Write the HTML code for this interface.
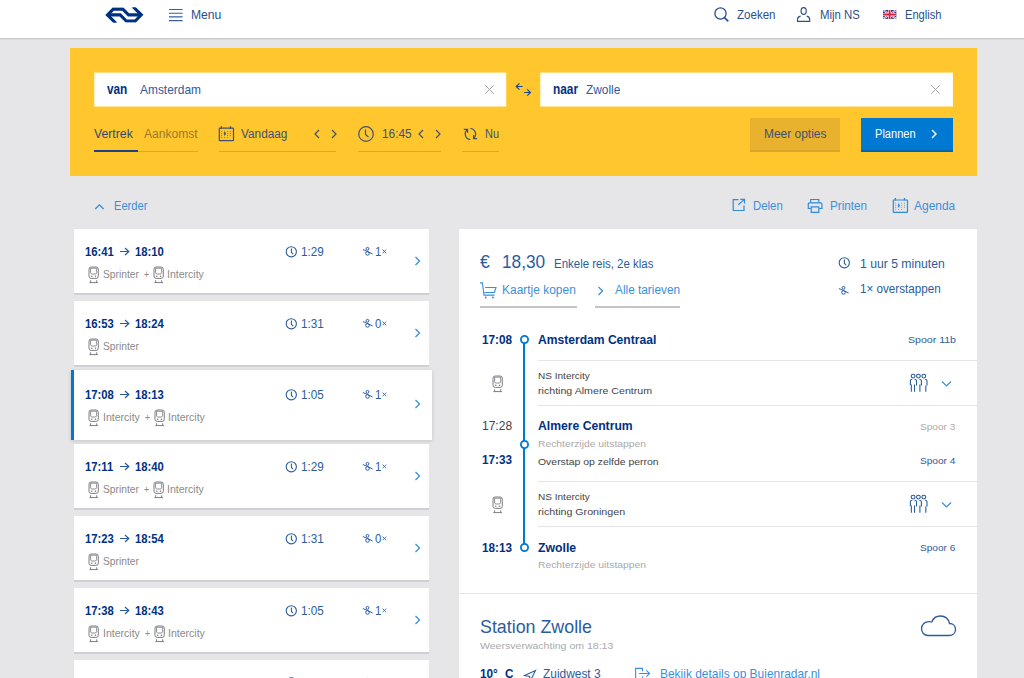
<!DOCTYPE html>
<html><head><meta charset="utf-8"><style>
html,body{margin:0;padding:0;}
body{width:1024px;height:678px;overflow:hidden;position:relative;background:#e6e6e9;font-family:"Liberation Sans",sans-serif;}
.t{position:absolute;white-space:nowrap;line-height:1;transform-origin:0 0;}
svg{overflow:visible}
</style></head><body>
<div style="position:absolute;left:0px;top:0px;width:1024px;height:38px;background:#fff"></div>
<div style="position:absolute;left:0px;top:38px;width:1024px;height:1px;background:#c9c9ce"></div>
<div style="position:absolute;left:0px;top:39px;width:1024px;height:1px;background:#dcdce0"></div>
<svg style="position:absolute;left:103px;top:5px;" width="44" height="21" viewBox="0 0 1024 489" fill="none"><defs><clipPath id="lc"><rect x="0" y="55" width="1024" height="357"/></clipPath></defs><g clip-path="url(#lc)" stroke="#003082" stroke-width="72" stroke-linejoin="miter" stroke-miterlimit="4" fill="none"><polyline points="300,426 104,230 239,95 460,95 595,230 891,230"/><polyline points="700,39 891,230 750,372 542,372 400,230 104,230"/></g></svg>
<svg style="position:absolute;left:168px;top:5px;" width="16" height="20" viewBox="0 0 16 20" fill="none"><path d="M1 4.5 H14.6 M1 8.2 H14.6 M1 11.9 H14.6 M1 15.6 H14.6" stroke="#3a5f9a" stroke-width="1.1"/></svg>
<div class="t" style="left:191.30px;top:9px;font-size:12.5px;transform:scaleX(0.9696);color:#2b4f8e;">Menu</div>
<svg style="position:absolute;left:712px;top:6px;" width="18" height="18" viewBox="0 0 18 18" fill="none"><circle cx="8.5" cy="7.5" r="5.6" stroke="#2b4f8e" stroke-width="1.3"/><line x1="12.5" y1="11.6" x2="16.3" y2="15.4" stroke="#2b4f8e" stroke-width="1.6"/></svg>
<div class="t" style="left:736.60px;top:9px;font-size:12.5px;transform:scaleX(0.9233);color:#2b4f8e;">Zoeken</div>
<svg style="position:absolute;left:792px;top:4px;" width="22" height="20" viewBox="0 0 22 20" fill="none"><g stroke="#2b4f8e" stroke-width="1.15" fill="none"><ellipse cx="11.65" cy="7" rx="2.6" ry="3.4"/><path d="M8.6 12.1 Q5.5 12.6 5.5 15.5 V17.4 H17.7 V15.5 Q17.7 12.6 14.7 12.1"/></g></svg>
<div class="t" style="left:820.30px;top:9px;font-size:12.5px;transform:scaleX(0.9097);color:#2b4f8e;">Mijn NS</div>
<svg style="position:absolute;left:882.6px;top:10px" width="13.3" height="8.9" viewBox="0 0 13 8" preserveAspectRatio="none"><rect width="13" height="8" fill="#1f3f8f"/><path d="M0 0 L13 8 M13 0 L0 8" stroke="#fff" stroke-width="1.8"/><path d="M0 0 L13 8 M13 0 L0 8" stroke="#e0304a" stroke-width="0.7"/><path d="M6.5 0 V8 M0 4 H13" stroke="#fff" stroke-width="2.8"/><path d="M6.5 0 V8 M0 4 H13" stroke="#dc1c3c" stroke-width="1.7"/></svg>
<div class="t" style="left:904.90px;top:9px;font-size:12.5px;transform:scaleX(0.8878);color:#2b4f8e;">English</div>
<div style="position:absolute;left:70px;top:48px;width:907px;height:128px;background:#ffc62e"></div>
<svg style="position:absolute;left:0;top:0" width="1024" height="178"><rect x="94.3" y="72.6" width="411.9" height="33.9" fill="#fff"/><rect x="540.3" y="72.6" width="412.6" height="33.9" fill="#fff"/></svg>
<div class="t" style="left:106.60px;top:82px;font-size:14px;transform:scaleX(0.8423);color:#003082;font-weight:bold;">van</div>
<div class="t" style="left:140.20px;top:84px;font-size:12.4px;transform:scaleX(0.9621);color:#2c5b9e;">Amsterdam</div>
<svg style="position:absolute;left:484px;top:84px;" width="11" height="11" viewBox="0 0 11 11" fill="none"><path d="M1.2 1.2 L9.8 9.8 M9.8 1.2 L1.2 9.8" stroke="#a6a6a6" stroke-width="1"/></svg>
<div class="t" style="left:553.00px;top:82px;font-size:14px;transform:scaleX(0.8460);color:#003082;font-weight:bold;">naar</div>
<div class="t" style="left:585.70px;top:84px;font-size:12.4px;transform:scaleX(0.9568);color:#2c5b9e;">Zwolle</div>
<svg style="position:absolute;left:930px;top:84px;" width="11" height="11" viewBox="0 0 11 11" fill="none"><path d="M1.2 1.2 L9.8 9.8 M9.8 1.2 L1.2 9.8" stroke="#a6a6a6" stroke-width="1"/></svg>
<svg style="position:absolute;left:510px;top:78px;" width="24" height="22" viewBox="0 0 24 22" fill="none"><g stroke="#1d4380" stroke-width="1.1" fill="none"><path d="M6.2 8.5 H12.6 M9.4 5.3 L6.2 8.5 L9.4 11.7"/><path d="M14.2 14.5 H20.5 M17.2 11.3 L20.5 14.5 L17.2 17.7"/></g></svg>
<div class="t" style="left:94.00px;top:128px;font-size:12px;transform:scaleX(1.0197);color:#2f4a6e;">Vertrek</div>
<div class="t" style="left:144.00px;top:128px;font-size:12px;transform:scaleX(1.0066);color:#9a7b2a;">Aankomst</div>
<div style="position:absolute;left:94px;top:151px;width:104px;height:1px;background:#d9a92a"></div>
<div style="position:absolute;left:94px;top:150px;width:44px;height:2px;background:#1d4380"></div>
<svg style="position:absolute;left:214px;top:122px;" width="26" height="24" viewBox="0 0 26 24" fill="none"><rect x="5.3" y="6.2" width="14.2" height="12.4" rx="0.6" stroke="#3f5170" stroke-width="1.2"/><path d="M7.4 4.3 V6.7 M16.5 4.3 V6.7" stroke="#3f5170" stroke-width="1.3"/><g fill="#3f5170" opacity="0.55"><rect x="7.1" y="8.9" width="1" height="1"/><rect x="7.1" y="11.0" width="1" height="1"/><rect x="7.1" y="13.0" width="1" height="1"/><rect x="7.1" y="15.1" width="1" height="1"/><rect x="10.1" y="8.9" width="1" height="1"/><rect x="10.1" y="11.0" width="1" height="1"/><rect x="10.1" y="13.0" width="1" height="1"/><rect x="10.1" y="15.1" width="1" height="1"/><rect x="13.1" y="8.9" width="1" height="1"/><rect x="13.1" y="11.0" width="1" height="1"/><rect x="13.1" y="13.0" width="1" height="1"/><rect x="13.1" y="15.1" width="1" height="1"/><rect x="16.0" y="8.9" width="1" height="1"/><rect x="16.0" y="11.0" width="1" height="1"/><rect x="16.0" y="13.0" width="1" height="1"/></g><ellipse cx="10.8" cy="11.6" rx="1" ry="1.5" fill="#3f5170"/></svg>
<div class="t" style="left:240.80px;top:128px;font-size:12px;transform:scaleX(0.9841);color:#3f5170;">Vandaag</div>
<svg style="position:absolute;left:313px;top:129px;" width="9" height="10" viewBox="0 0 9 10" fill="none"><path d="M6 1 L2 5 L6 9" stroke="#3f5170" stroke-width="1.2"/></svg>
<svg style="position:absolute;left:329px;top:129px;" width="9" height="10" viewBox="0 0 9 10" fill="none"><path d="M3 1 L7 5 L3 9" stroke="#3f5170" stroke-width="1.2"/></svg>
<div style="position:absolute;left:219px;top:151px;width:117px;height:1px;background:#d9a92a"></div>
<svg style="position:absolute;left:357px;top:125px;" width="18" height="18" viewBox="0 0 18 18" fill="none"><circle cx="9" cy="9" r="7.3" stroke="#3f5170" stroke-width="1.2"/><path d="M8.5 4.5 V9.5 L11.5 12" stroke="#3f5170" stroke-width="1.2"/></svg>
<div class="t" style="left:382.00px;top:128px;font-size:12px;transform:scaleX(0.9884);color:#3f5170;">16:45</div>
<svg style="position:absolute;left:417px;top:129px;" width="9" height="10" viewBox="0 0 9 10" fill="none"><path d="M6 1 L2 5 L6 9" stroke="#3f5170" stroke-width="1.2"/></svg>
<svg style="position:absolute;left:433px;top:129px;" width="9" height="10" viewBox="0 0 9 10" fill="none"><path d="M3 1 L7 5 L3 9" stroke="#3f5170" stroke-width="1.2"/></svg>
<div style="position:absolute;left:358px;top:151px;width:83px;height:1px;background:#d9a92a"></div>
<svg style="position:absolute;left:458px;top:122px;" width="24" height="24" viewBox="0 0 24 24" fill="none"><g stroke="#3f5170" stroke-width="1.2" fill="none"><path d="M12.4 17.5 A5.5 5.5 0 0 1 9.2 7.8 M5.8 7.3 H9.6 V10.8"/><path d="M12.4 6.5 A5.5 5.5 0 0 1 15.6 16.2 M19.2 16.6 H15.6 V13"/></g></svg>
<div class="t" style="left:485.00px;top:128px;font-size:12px;transform:scaleX(0.9121);color:#3f5170;">Nu</div>
<div style="position:absolute;left:462px;top:151px;width:37px;height:1px;background:#d9a92a"></div>
<div style="position:absolute;left:750px;top:118px;width:90px;height:34px;background:#e8b22e;box-shadow:inset 0 -2px 0 #d9a42a"></div>
<div class="t" style="left:763.80px;top:128px;font-size:12px;transform:scaleX(0.9952);color:#3f5170;">Meer opties</div>
<div style="position:absolute;left:861px;top:118px;width:92px;height:34px;background:#0079d3;box-shadow:inset 0 -2px 0 #0063b0"></div>
<div class="t" style="left:875.40px;top:128px;font-size:12px;transform:scaleX(0.9217);color:#fff;">Plannen</div>
<svg style="position:absolute;left:929px;top:129px;" width="9" height="10" viewBox="0 0 9 10" fill="none"><path d="M3 1 L7 5 L3 9" stroke="#fff" stroke-width="1.4"/></svg>
<svg style="position:absolute;left:93px;top:202px;" width="12" height="9" viewBox="0 0 12 9" fill="none"><path d="M2.2 7 L6.4 2.8 L10.6 7" stroke="#2f8ad9" stroke-width="1.2"/></svg>
<div class="t" style="left:113.90px;top:200px;font-size:12.5px;transform:scaleX(0.8907);color:#3b8fd9;">Eerder</div>
<svg style="position:absolute;left:731px;top:197px;" width="16" height="16" viewBox="0 0 16 16" fill="none"><g stroke="#2f8ad9" stroke-width="1.2" fill="none"><path d="M7.5 2.7 H2.2 V13.5 H13 V8.5"/><path d="M7.3 7.8 L13.3 2.4 M9.3 2.3 H13.5 V6.4"/></g></svg>
<div class="t" style="left:752.50px;top:200px;font-size:12.5px;transform:scaleX(0.9096);color:#3b8fd9;">Delen</div>
<svg style="position:absolute;left:806px;top:197px;" width="18" height="17" viewBox="0 0 18 17" fill="none"><g stroke="#2f8ad9" stroke-width="1.2" fill="none"><path d="M4.7 5.5 V2.5 H12.8 V5.5"/><path d="M4.8 11.5 H2.3 V7 Q2.3 5.8 3.5 5.8 H14.7 Q15.9 5.8 15.9 7 V11.5 H13.2"/><path d="M5.2 9.9 H12.8 V15.4 H5.2 Z"/></g></svg>
<div class="t" style="left:829.70px;top:200px;font-size:12.5px;transform:scaleX(0.9369);color:#3b8fd9;">Printen</div>
<svg style="position:absolute;left:891px;top:197px;" width="18" height="16" viewBox="0 0 18 16" fill="none"><rect x="2.3" y="3" width="14.2" height="12.4" rx="0.6" stroke="#2f8ad9" stroke-width="1.2"/><path d="M4.4 1.1 V3.5 M13.5 1.1 V3.5" stroke="#2f8ad9" stroke-width="1.3"/><g fill="#2f8ad9" opacity="0.6"><rect x="4.1" y="5.7" width="1.1" height="1.1"/><rect x="4.1" y="7.800000000000001" width="1.1" height="1.1"/><rect x="4.1" y="9.8" width="1.1" height="1.1"/><rect x="4.1" y="11.9" width="1.1" height="1.1"/><rect x="7.1" y="5.7" width="1.1" height="1.1"/><rect x="7.1" y="7.800000000000001" width="1.1" height="1.1"/><rect x="7.1" y="9.8" width="1.1" height="1.1"/><rect x="7.1" y="11.9" width="1.1" height="1.1"/><rect x="10.1" y="5.7" width="1.1" height="1.1"/><rect x="10.1" y="7.800000000000001" width="1.1" height="1.1"/><rect x="10.1" y="9.8" width="1.1" height="1.1"/><rect x="10.1" y="11.9" width="1.1" height="1.1"/><rect x="13.0" y="5.7" width="1.1" height="1.1"/><rect x="13.0" y="7.800000000000001" width="1.1" height="1.1"/><rect x="13.0" y="9.8" width="1.1" height="1.1"/></g><ellipse cx="7.8" cy="8.4" rx="1" ry="1.5" fill="#2f8ad9"/></svg>
<div class="t" style="left:914.30px;top:200px;font-size:12.5px;transform:scaleX(0.9571);color:#3b8fd9;">Agenda</div>
<div style="position:absolute;left:74px;top:229px;width:355px;height:64px;background:#fff;box-shadow:0 2px 0 #cfcfd4"></div>
<div class="t" style="left:85.40px;top:246px;font-size:12.4px;transform:scaleX(0.9085);color:#003082;font-weight:bold;">16:41</div>
<svg style="position:absolute;left:119px;top:247px;" width="11" height="9" viewBox="0 0 11 9" fill="none"><path d="M1 4.5 H9.8 M6 1 L9.8 4.5 L6 8" stroke="#2b5c9e" stroke-width="1.2"/></svg>
<div class="t" style="left:135.20px;top:246px;font-size:12.4px;transform:scaleX(0.9085);color:#003082;font-weight:bold;">18:10</div>
<svg style="position:absolute;left:285px;top:245.5px;" width="12" height="12" viewBox="0 0 12 12" fill="none"><circle cx="6.3" cy="5.8" r="5.1" stroke="#2b5c9e" stroke-width="1.1"/><path d="M6.4 2.6 V6.3 L8.1 8.2" stroke="#2b5c9e" stroke-width="1.1"/></svg>
<div class="t" style="left:300.90px;top:246px;font-size:12px;transform:scaleX(0.9764);color:#2b5c9e;">1:29</div>
<svg style="position:absolute;left:362px;top:245.8px;" width="12" height="11" viewBox="0 0 12 11" fill="none"><g stroke="#2b5c9e" stroke-width="1" fill="none"><circle cx="5.5" cy="2.8" r="1.4"/><circle cx="5.5" cy="7.4" r="1.8"/><path d="M0.9 3.5 L10.6 7.9"/></g></svg>
<div class="t" style="left:374.80px;top:246px;font-size:12px;transform:scaleX(0.9500);color:#2b5c9e;">1</div>
<svg style="position:absolute;left:381.5px;top:249px;" width="5" height="5" viewBox="0 0 5 5" fill="none"><path d="M0.6 0.6 L4.2 4.2 M4.2 0.6 L0.6 4.2" stroke="#3a68a8" stroke-width="0.95"/></svg>
<svg style="position:absolute;left:413px;top:256px;" width="9" height="10" viewBox="0 0 9 10" fill="none"><path d="M2.5 1 L6.5 5 L2.5 9" stroke="#3b8fd9" stroke-width="1.3"/></svg>
<svg style="position:absolute;left:87.5px;top:265.5px;" width="12" height="18" viewBox="0 0 12 18" fill="none"><g stroke="#7d7d85" stroke-width="1" fill="none"><rect x="1" y="1" width="9.3" height="11.4" rx="2.2"/><path d="M2.6 2.2 H8.7 V6.2 C8.7 7.6 8 8 6.8 8 H4.5 C3.3 8 2.6 7.6 2.6 6.2 Z" stroke-width="0.9"/><path d="M2.6 14.3 V17 M8.7 14.3 V17 M1.4 16.6 H9.9"/></g><circle cx="3.8" cy="10.2" r="0.8" fill="#7d7d85"/><circle cx="7.5" cy="10.2" r="0.8" fill="#7d7d85"/></svg>
<div class="t" style="left:102.50px;top:269px;font-size:10.6px;transform:scaleX(0.9704);color:#8a8a8a;">Sprinter</div>
<div class="t" style="left:143.80px;top:269px;font-size:10.6px;transform:scaleX(0.8387);color:#8a8a8a;">+</div>
<svg style="position:absolute;left:152.8px;top:265.5px;" width="12" height="18" viewBox="0 0 12 18" fill="none"><g stroke="#7d7d85" stroke-width="1" fill="none"><rect x="1" y="1" width="9.3" height="11.4" rx="2.2"/><path d="M2.6 2.2 H8.7 V6.2 C8.7 7.6 8 8 6.8 8 H4.5 C3.3 8 2.6 7.6 2.6 6.2 Z" stroke-width="0.9"/><path d="M2.6 14.3 V17 M8.7 14.3 V17 M1.4 16.6 H9.9"/></g><circle cx="3.8" cy="10.2" r="0.8" fill="#7d7d85"/><circle cx="7.5" cy="10.2" r="0.8" fill="#7d7d85"/></svg>
<div class="t" style="left:167.30px;top:269px;font-size:10.6px;transform:scaleX(0.9946);color:#8a8a8a;">Intercity</div>
<div style="position:absolute;left:74px;top:301px;width:355px;height:64px;background:#fff;box-shadow:0 2px 0 #cfcfd4"></div>
<div class="t" style="left:85.40px;top:318px;font-size:12.4px;transform:scaleX(0.9085);color:#003082;font-weight:bold;">16:53</div>
<svg style="position:absolute;left:119px;top:319px;" width="11" height="9" viewBox="0 0 11 9" fill="none"><path d="M1 4.5 H9.8 M6 1 L9.8 4.5 L6 8" stroke="#2b5c9e" stroke-width="1.2"/></svg>
<div class="t" style="left:135.20px;top:318px;font-size:12.4px;transform:scaleX(0.9085);color:#003082;font-weight:bold;">18:24</div>
<svg style="position:absolute;left:285px;top:317.5px;" width="12" height="12" viewBox="0 0 12 12" fill="none"><circle cx="6.3" cy="5.8" r="5.1" stroke="#2b5c9e" stroke-width="1.1"/><path d="M6.4 2.6 V6.3 L8.1 8.2" stroke="#2b5c9e" stroke-width="1.1"/></svg>
<div class="t" style="left:300.90px;top:318px;font-size:12px;transform:scaleX(0.9764);color:#2b5c9e;">1:31</div>
<svg style="position:absolute;left:362px;top:317.8px;" width="12" height="11" viewBox="0 0 12 11" fill="none"><g stroke="#2b5c9e" stroke-width="1" fill="none"><circle cx="5.5" cy="2.8" r="1.4"/><circle cx="5.5" cy="7.4" r="1.8"/><path d="M0.9 3.5 L10.6 7.9"/></g></svg>
<div class="t" style="left:374.50px;top:318px;font-size:12px;transform:scaleX(0.9500);color:#2b5c9e;">0</div>
<svg style="position:absolute;left:381.5px;top:321px;" width="5" height="5" viewBox="0 0 5 5" fill="none"><path d="M0.6 0.6 L4.2 4.2 M4.2 0.6 L0.6 4.2" stroke="#3a68a8" stroke-width="0.95"/></svg>
<svg style="position:absolute;left:413px;top:328px;" width="9" height="10" viewBox="0 0 9 10" fill="none"><path d="M2.5 1 L6.5 5 L2.5 9" stroke="#3b8fd9" stroke-width="1.3"/></svg>
<svg style="position:absolute;left:87.5px;top:337.5px;" width="12" height="18" viewBox="0 0 12 18" fill="none"><g stroke="#7d7d85" stroke-width="1" fill="none"><rect x="1" y="1" width="9.3" height="11.4" rx="2.2"/><path d="M2.6 2.2 H8.7 V6.2 C8.7 7.6 8 8 6.8 8 H4.5 C3.3 8 2.6 7.6 2.6 6.2 Z" stroke-width="0.9"/><path d="M2.6 14.3 V17 M8.7 14.3 V17 M1.4 16.6 H9.9"/></g><circle cx="3.8" cy="10.2" r="0.8" fill="#7d7d85"/><circle cx="7.5" cy="10.2" r="0.8" fill="#7d7d85"/></svg>
<div class="t" style="left:102.50px;top:341px;font-size:10.6px;transform:scaleX(0.9704);color:#8a8a8a;">Sprinter</div>
<div style="position:absolute;left:71px;top:370px;width:361px;height:70px;background:#fff;box-shadow:0 1px 4px rgba(0,0,0,0.15)"></div>
<div style="position:absolute;left:71px;top:370px;width:3px;height:70px;background:#0079d3"></div>
<div class="t" style="left:85.40px;top:389px;font-size:12.4px;transform:scaleX(0.9085);color:#003082;font-weight:bold;">17:08</div>
<svg style="position:absolute;left:119px;top:390px;" width="11" height="9" viewBox="0 0 11 9" fill="none"><path d="M1 4.5 H9.8 M6 1 L9.8 4.5 L6 8" stroke="#2b5c9e" stroke-width="1.2"/></svg>
<div class="t" style="left:135.20px;top:389px;font-size:12.4px;transform:scaleX(0.9085);color:#003082;font-weight:bold;">18:13</div>
<svg style="position:absolute;left:285px;top:388.5px;" width="12" height="12" viewBox="0 0 12 12" fill="none"><circle cx="6.3" cy="5.8" r="5.1" stroke="#2b5c9e" stroke-width="1.1"/><path d="M6.4 2.6 V6.3 L8.1 8.2" stroke="#2b5c9e" stroke-width="1.1"/></svg>
<div class="t" style="left:300.90px;top:389px;font-size:12px;transform:scaleX(0.9764);color:#2b5c9e;">1:05</div>
<svg style="position:absolute;left:362px;top:388.8px;" width="12" height="11" viewBox="0 0 12 11" fill="none"><g stroke="#2b5c9e" stroke-width="1" fill="none"><circle cx="5.5" cy="2.8" r="1.4"/><circle cx="5.5" cy="7.4" r="1.8"/><path d="M0.9 3.5 L10.6 7.9"/></g></svg>
<div class="t" style="left:374.80px;top:389px;font-size:12px;transform:scaleX(0.9500);color:#2b5c9e;">1</div>
<svg style="position:absolute;left:381.5px;top:392px;" width="5" height="5" viewBox="0 0 5 5" fill="none"><path d="M0.6 0.6 L4.2 4.2 M4.2 0.6 L0.6 4.2" stroke="#3a68a8" stroke-width="0.95"/></svg>
<svg style="position:absolute;left:413px;top:399px;" width="9" height="10" viewBox="0 0 9 10" fill="none"><path d="M2.5 1 L6.5 5 L2.5 9" stroke="#3b8fd9" stroke-width="1.3"/></svg>
<svg style="position:absolute;left:87.5px;top:408.5px;" width="12" height="18" viewBox="0 0 12 18" fill="none"><g stroke="#7d7d85" stroke-width="1" fill="none"><rect x="1" y="1" width="9.3" height="11.4" rx="2.2"/><path d="M2.6 2.2 H8.7 V6.2 C8.7 7.6 8 8 6.8 8 H4.5 C3.3 8 2.6 7.6 2.6 6.2 Z" stroke-width="0.9"/><path d="M2.6 14.3 V17 M8.7 14.3 V17 M1.4 16.6 H9.9"/></g><circle cx="3.8" cy="10.2" r="0.8" fill="#7d7d85"/><circle cx="7.5" cy="10.2" r="0.8" fill="#7d7d85"/></svg>
<div class="t" style="left:102.50px;top:412px;font-size:10.6px;transform:scaleX(0.9946);color:#8a8a8a;">Intercity</div>
<div class="t" style="left:144.70px;top:412px;font-size:10.6px;transform:scaleX(0.8387);color:#8a8a8a;">+</div>
<svg style="position:absolute;left:153.70000000000002px;top:408.5px;" width="12" height="18" viewBox="0 0 12 18" fill="none"><g stroke="#7d7d85" stroke-width="1" fill="none"><rect x="1" y="1" width="9.3" height="11.4" rx="2.2"/><path d="M2.6 2.2 H8.7 V6.2 C8.7 7.6 8 8 6.8 8 H4.5 C3.3 8 2.6 7.6 2.6 6.2 Z" stroke-width="0.9"/><path d="M2.6 14.3 V17 M8.7 14.3 V17 M1.4 16.6 H9.9"/></g><circle cx="3.8" cy="10.2" r="0.8" fill="#7d7d85"/><circle cx="7.5" cy="10.2" r="0.8" fill="#7d7d85"/></svg>
<div class="t" style="left:168.20px;top:412px;font-size:10.6px;transform:scaleX(0.9946);color:#8a8a8a;">Intercity</div>
<div style="position:absolute;left:74px;top:444px;width:355px;height:64px;background:#fff;box-shadow:0 2px 0 #cfcfd4"></div>
<div class="t" style="left:85.40px;top:461px;font-size:12.4px;transform:scaleX(0.9085);color:#003082;font-weight:bold;">17:11</div>
<svg style="position:absolute;left:119px;top:462px;" width="11" height="9" viewBox="0 0 11 9" fill="none"><path d="M1 4.5 H9.8 M6 1 L9.8 4.5 L6 8" stroke="#2b5c9e" stroke-width="1.2"/></svg>
<div class="t" style="left:135.20px;top:461px;font-size:12.4px;transform:scaleX(0.9085);color:#003082;font-weight:bold;">18:40</div>
<svg style="position:absolute;left:285px;top:460.5px;" width="12" height="12" viewBox="0 0 12 12" fill="none"><circle cx="6.3" cy="5.8" r="5.1" stroke="#2b5c9e" stroke-width="1.1"/><path d="M6.4 2.6 V6.3 L8.1 8.2" stroke="#2b5c9e" stroke-width="1.1"/></svg>
<div class="t" style="left:300.90px;top:461px;font-size:12px;transform:scaleX(0.9764);color:#2b5c9e;">1:29</div>
<svg style="position:absolute;left:362px;top:460.8px;" width="12" height="11" viewBox="0 0 12 11" fill="none"><g stroke="#2b5c9e" stroke-width="1" fill="none"><circle cx="5.5" cy="2.8" r="1.4"/><circle cx="5.5" cy="7.4" r="1.8"/><path d="M0.9 3.5 L10.6 7.9"/></g></svg>
<div class="t" style="left:374.80px;top:461px;font-size:12px;transform:scaleX(0.9500);color:#2b5c9e;">1</div>
<svg style="position:absolute;left:381.5px;top:464px;" width="5" height="5" viewBox="0 0 5 5" fill="none"><path d="M0.6 0.6 L4.2 4.2 M4.2 0.6 L0.6 4.2" stroke="#3a68a8" stroke-width="0.95"/></svg>
<svg style="position:absolute;left:413px;top:471px;" width="9" height="10" viewBox="0 0 9 10" fill="none"><path d="M2.5 1 L6.5 5 L2.5 9" stroke="#3b8fd9" stroke-width="1.3"/></svg>
<svg style="position:absolute;left:87.5px;top:480.5px;" width="12" height="18" viewBox="0 0 12 18" fill="none"><g stroke="#7d7d85" stroke-width="1" fill="none"><rect x="1" y="1" width="9.3" height="11.4" rx="2.2"/><path d="M2.6 2.2 H8.7 V6.2 C8.7 7.6 8 8 6.8 8 H4.5 C3.3 8 2.6 7.6 2.6 6.2 Z" stroke-width="0.9"/><path d="M2.6 14.3 V17 M8.7 14.3 V17 M1.4 16.6 H9.9"/></g><circle cx="3.8" cy="10.2" r="0.8" fill="#7d7d85"/><circle cx="7.5" cy="10.2" r="0.8" fill="#7d7d85"/></svg>
<div class="t" style="left:102.50px;top:484px;font-size:10.6px;transform:scaleX(0.9704);color:#8a8a8a;">Sprinter</div>
<div class="t" style="left:143.80px;top:484px;font-size:10.6px;transform:scaleX(0.8387);color:#8a8a8a;">+</div>
<svg style="position:absolute;left:152.8px;top:480.5px;" width="12" height="18" viewBox="0 0 12 18" fill="none"><g stroke="#7d7d85" stroke-width="1" fill="none"><rect x="1" y="1" width="9.3" height="11.4" rx="2.2"/><path d="M2.6 2.2 H8.7 V6.2 C8.7 7.6 8 8 6.8 8 H4.5 C3.3 8 2.6 7.6 2.6 6.2 Z" stroke-width="0.9"/><path d="M2.6 14.3 V17 M8.7 14.3 V17 M1.4 16.6 H9.9"/></g><circle cx="3.8" cy="10.2" r="0.8" fill="#7d7d85"/><circle cx="7.5" cy="10.2" r="0.8" fill="#7d7d85"/></svg>
<div class="t" style="left:167.30px;top:484px;font-size:10.6px;transform:scaleX(0.9946);color:#8a8a8a;">Intercity</div>
<div style="position:absolute;left:74px;top:516px;width:355px;height:64px;background:#fff;box-shadow:0 2px 0 #cfcfd4"></div>
<div class="t" style="left:85.40px;top:533px;font-size:12.4px;transform:scaleX(0.9085);color:#003082;font-weight:bold;">17:23</div>
<svg style="position:absolute;left:119px;top:534px;" width="11" height="9" viewBox="0 0 11 9" fill="none"><path d="M1 4.5 H9.8 M6 1 L9.8 4.5 L6 8" stroke="#2b5c9e" stroke-width="1.2"/></svg>
<div class="t" style="left:135.20px;top:533px;font-size:12.4px;transform:scaleX(0.9085);color:#003082;font-weight:bold;">18:54</div>
<svg style="position:absolute;left:285px;top:532.5px;" width="12" height="12" viewBox="0 0 12 12" fill="none"><circle cx="6.3" cy="5.8" r="5.1" stroke="#2b5c9e" stroke-width="1.1"/><path d="M6.4 2.6 V6.3 L8.1 8.2" stroke="#2b5c9e" stroke-width="1.1"/></svg>
<div class="t" style="left:300.90px;top:533px;font-size:12px;transform:scaleX(0.9764);color:#2b5c9e;">1:31</div>
<svg style="position:absolute;left:362px;top:532.8px;" width="12" height="11" viewBox="0 0 12 11" fill="none"><g stroke="#2b5c9e" stroke-width="1" fill="none"><circle cx="5.5" cy="2.8" r="1.4"/><circle cx="5.5" cy="7.4" r="1.8"/><path d="M0.9 3.5 L10.6 7.9"/></g></svg>
<div class="t" style="left:374.50px;top:533px;font-size:12px;transform:scaleX(0.9500);color:#2b5c9e;">0</div>
<svg style="position:absolute;left:381.5px;top:536px;" width="5" height="5" viewBox="0 0 5 5" fill="none"><path d="M0.6 0.6 L4.2 4.2 M4.2 0.6 L0.6 4.2" stroke="#3a68a8" stroke-width="0.95"/></svg>
<svg style="position:absolute;left:413px;top:543px;" width="9" height="10" viewBox="0 0 9 10" fill="none"><path d="M2.5 1 L6.5 5 L2.5 9" stroke="#3b8fd9" stroke-width="1.3"/></svg>
<svg style="position:absolute;left:87.5px;top:552.5px;" width="12" height="18" viewBox="0 0 12 18" fill="none"><g stroke="#7d7d85" stroke-width="1" fill="none"><rect x="1" y="1" width="9.3" height="11.4" rx="2.2"/><path d="M2.6 2.2 H8.7 V6.2 C8.7 7.6 8 8 6.8 8 H4.5 C3.3 8 2.6 7.6 2.6 6.2 Z" stroke-width="0.9"/><path d="M2.6 14.3 V17 M8.7 14.3 V17 M1.4 16.6 H9.9"/></g><circle cx="3.8" cy="10.2" r="0.8" fill="#7d7d85"/><circle cx="7.5" cy="10.2" r="0.8" fill="#7d7d85"/></svg>
<div class="t" style="left:102.50px;top:556px;font-size:10.6px;transform:scaleX(0.9704);color:#8a8a8a;">Sprinter</div>
<div style="position:absolute;left:74px;top:588px;width:355px;height:64px;background:#fff;box-shadow:0 2px 0 #cfcfd4"></div>
<div class="t" style="left:85.40px;top:605px;font-size:12.4px;transform:scaleX(0.9085);color:#003082;font-weight:bold;">17:38</div>
<svg style="position:absolute;left:119px;top:606px;" width="11" height="9" viewBox="0 0 11 9" fill="none"><path d="M1 4.5 H9.8 M6 1 L9.8 4.5 L6 8" stroke="#2b5c9e" stroke-width="1.2"/></svg>
<div class="t" style="left:135.20px;top:605px;font-size:12.4px;transform:scaleX(0.9085);color:#003082;font-weight:bold;">18:43</div>
<svg style="position:absolute;left:285px;top:604.5px;" width="12" height="12" viewBox="0 0 12 12" fill="none"><circle cx="6.3" cy="5.8" r="5.1" stroke="#2b5c9e" stroke-width="1.1"/><path d="M6.4 2.6 V6.3 L8.1 8.2" stroke="#2b5c9e" stroke-width="1.1"/></svg>
<div class="t" style="left:300.90px;top:605px;font-size:12px;transform:scaleX(0.9764);color:#2b5c9e;">1:05</div>
<svg style="position:absolute;left:362px;top:604.8px;" width="12" height="11" viewBox="0 0 12 11" fill="none"><g stroke="#2b5c9e" stroke-width="1" fill="none"><circle cx="5.5" cy="2.8" r="1.4"/><circle cx="5.5" cy="7.4" r="1.8"/><path d="M0.9 3.5 L10.6 7.9"/></g></svg>
<div class="t" style="left:374.80px;top:605px;font-size:12px;transform:scaleX(0.9500);color:#2b5c9e;">1</div>
<svg style="position:absolute;left:381.5px;top:608px;" width="5" height="5" viewBox="0 0 5 5" fill="none"><path d="M0.6 0.6 L4.2 4.2 M4.2 0.6 L0.6 4.2" stroke="#3a68a8" stroke-width="0.95"/></svg>
<svg style="position:absolute;left:413px;top:615px;" width="9" height="10" viewBox="0 0 9 10" fill="none"><path d="M2.5 1 L6.5 5 L2.5 9" stroke="#3b8fd9" stroke-width="1.3"/></svg>
<svg style="position:absolute;left:87.5px;top:624.5px;" width="12" height="18" viewBox="0 0 12 18" fill="none"><g stroke="#7d7d85" stroke-width="1" fill="none"><rect x="1" y="1" width="9.3" height="11.4" rx="2.2"/><path d="M2.6 2.2 H8.7 V6.2 C8.7 7.6 8 8 6.8 8 H4.5 C3.3 8 2.6 7.6 2.6 6.2 Z" stroke-width="0.9"/><path d="M2.6 14.3 V17 M8.7 14.3 V17 M1.4 16.6 H9.9"/></g><circle cx="3.8" cy="10.2" r="0.8" fill="#7d7d85"/><circle cx="7.5" cy="10.2" r="0.8" fill="#7d7d85"/></svg>
<div class="t" style="left:102.50px;top:628px;font-size:10.6px;transform:scaleX(0.9946);color:#8a8a8a;">Intercity</div>
<div class="t" style="left:144.70px;top:628px;font-size:10.6px;transform:scaleX(0.8387);color:#8a8a8a;">+</div>
<svg style="position:absolute;left:153.70000000000002px;top:624.5px;" width="12" height="18" viewBox="0 0 12 18" fill="none"><g stroke="#7d7d85" stroke-width="1" fill="none"><rect x="1" y="1" width="9.3" height="11.4" rx="2.2"/><path d="M2.6 2.2 H8.7 V6.2 C8.7 7.6 8 8 6.8 8 H4.5 C3.3 8 2.6 7.6 2.6 6.2 Z" stroke-width="0.9"/><path d="M2.6 14.3 V17 M8.7 14.3 V17 M1.4 16.6 H9.9"/></g><circle cx="3.8" cy="10.2" r="0.8" fill="#7d7d85"/><circle cx="7.5" cy="10.2" r="0.8" fill="#7d7d85"/></svg>
<div class="t" style="left:168.20px;top:628px;font-size:10.6px;transform:scaleX(0.9946);color:#8a8a8a;">Intercity</div>
<div style="position:absolute;left:74px;top:660px;width:355px;height:64px;background:#fff;box-shadow:0 2px 0 #cfcfd4"></div>
<div class="t" style="left:85.40px;top:677px;font-size:12.4px;transform:scaleX(0.9085);color:#003082;font-weight:bold;">17:48</div>
<svg style="position:absolute;left:119px;top:678px;" width="11" height="9" viewBox="0 0 11 9" fill="none"><path d="M1 4.5 H9.8 M6 1 L9.8 4.5 L6 8" stroke="#2b5c9e" stroke-width="1.2"/></svg>
<div class="t" style="left:135.20px;top:677px;font-size:12.4px;transform:scaleX(0.9085);color:#003082;font-weight:bold;">18:55</div>
<svg style="position:absolute;left:285px;top:676.5px;" width="12" height="12" viewBox="0 0 12 12" fill="none"><circle cx="6.3" cy="5.8" r="5.1" stroke="#2b5c9e" stroke-width="1.1"/><path d="M6.4 2.6 V6.3 L8.1 8.2" stroke="#2b5c9e" stroke-width="1.1"/></svg>
<div class="t" style="left:300.90px;top:677px;font-size:12px;transform:scaleX(0.9764);color:#2b5c9e;">1:07</div>
<svg style="position:absolute;left:362px;top:676.8px;" width="12" height="11" viewBox="0 0 12 11" fill="none"><g stroke="#2b5c9e" stroke-width="1" fill="none"><circle cx="5.5" cy="2.8" r="1.4"/><circle cx="5.5" cy="7.4" r="1.8"/><path d="M0.9 3.5 L10.6 7.9"/></g></svg>
<div class="t" style="left:374.80px;top:677px;font-size:12px;transform:scaleX(0.9500);color:#2b5c9e;">1</div>
<svg style="position:absolute;left:381.5px;top:680px;" width="5" height="5" viewBox="0 0 5 5" fill="none"><path d="M0.6 0.6 L4.2 4.2 M4.2 0.6 L0.6 4.2" stroke="#3a68a8" stroke-width="0.95"/></svg>
<svg style="position:absolute;left:413px;top:687px;" width="9" height="10" viewBox="0 0 9 10" fill="none"><path d="M2.5 1 L6.5 5 L2.5 9" stroke="#3b8fd9" stroke-width="1.3"/></svg>
<svg style="position:absolute;left:87.5px;top:696.5px;" width="12" height="18" viewBox="0 0 12 18" fill="none"><g stroke="#7d7d85" stroke-width="1" fill="none"><rect x="1" y="1" width="9.3" height="11.4" rx="2.2"/><path d="M2.6 2.2 H8.7 V6.2 C8.7 7.6 8 8 6.8 8 H4.5 C3.3 8 2.6 7.6 2.6 6.2 Z" stroke-width="0.9"/><path d="M2.6 14.3 V17 M8.7 14.3 V17 M1.4 16.6 H9.9"/></g><circle cx="3.8" cy="10.2" r="0.8" fill="#7d7d85"/><circle cx="7.5" cy="10.2" r="0.8" fill="#7d7d85"/></svg>
<div class="t" style="left:102.50px;top:700px;font-size:10.6px;transform:scaleX(0.9946);color:#8a8a8a;">Intercity</div>
<div class="t" style="left:144.70px;top:700px;font-size:10.6px;transform:scaleX(0.8387);color:#8a8a8a;">+</div>
<svg style="position:absolute;left:153.70000000000002px;top:696.5px;" width="12" height="18" viewBox="0 0 12 18" fill="none"><g stroke="#7d7d85" stroke-width="1" fill="none"><rect x="1" y="1" width="9.3" height="11.4" rx="2.2"/><path d="M2.6 2.2 H8.7 V6.2 C8.7 7.6 8 8 6.8 8 H4.5 C3.3 8 2.6 7.6 2.6 6.2 Z" stroke-width="0.9"/><path d="M2.6 14.3 V17 M8.7 14.3 V17 M1.4 16.6 H9.9"/></g><circle cx="3.8" cy="10.2" r="0.8" fill="#7d7d85"/><circle cx="7.5" cy="10.2" r="0.8" fill="#7d7d85"/></svg>
<div class="t" style="left:168.20px;top:700px;font-size:10.6px;transform:scaleX(0.9946);color:#8a8a8a;">Intercity</div>
<div style="position:absolute;left:459px;top:229px;width:518px;height:460px;background:#fff"></div>
<div class="t" style="left:479.70px;top:253px;font-size:18.5px;transform:scaleX(0.9515);color:#2b5c9e;">€</div>
<div class="t" style="left:502.10px;top:253px;font-size:18.5px;transform:scaleX(0.9330);color:#2b5c9e;">18,30</div>
<div class="t" style="left:553.90px;top:258px;font-size:12px;transform:scaleX(0.9553);color:#2b5c9e;">Enkele reis, 2e klas</div>
<svg style="position:absolute;left:475px;top:277px;" width="25" height="25" viewBox="0 0 25 25" fill="none"><g stroke="#3b8fd9" stroke-width="1.1" fill="none"><path d="M5 5.9 H7.4 L9 18.1 H19.6"/><path d="M10.1 10.5 H21 L19.4 15.5 H9.2"/></g><circle cx="10.7" cy="20.6" r="1" fill="#3b8fd9"/><circle cx="17.9" cy="20.6" r="1" fill="#3b8fd9"/></svg>
<div class="t" style="left:502.20px;top:284px;font-size:12.5px;transform:scaleX(0.9566);color:#3b8fd9;">Kaartje kopen</div>
<div style="position:absolute;left:480px;top:306px;width:97px;height:2px;background:#c3c3c8"></div>
<svg style="position:absolute;left:596px;top:285.5px;" width="9" height="10" viewBox="0 0 9 10" fill="none"><path d="M2.5 1 L6.5 5 L2.5 9" stroke="#3b8fd9" stroke-width="1.3"/></svg>
<div class="t" style="left:614.70px;top:284px;font-size:12.5px;transform:scaleX(0.9462);color:#3b8fd9;">Alle tarieven</div>
<div style="position:absolute;left:595px;top:306px;width:85px;height:2px;background:#c3c3c8"></div>
<svg style="position:absolute;left:838px;top:257px;" width="12" height="12" viewBox="0 0 12 12" fill="none"><circle cx="6.3" cy="5.8" r="5.1" stroke="#2b5c9e" stroke-width="1.1"/><path d="M6.4 2.6 V6.3 L8.1 8.2" stroke="#2b5c9e" stroke-width="1.1"/></svg>
<div class="t" style="left:860.30px;top:258px;font-size:12px;transform:scaleX(1.0156);color:#2b5c9e;">1 uur 5 minuten</div>
<svg style="position:absolute;left:838px;top:284.5px;" width="11" height="11" viewBox="0 0 11 11" fill="none"><g stroke="#2b5c9e" stroke-width="1" fill="none"><circle cx="5.5" cy="2.8" r="1.4"/><circle cx="5.5" cy="7.4" r="1.8"/><path d="M0.9 3.5 L10.6 7.9"/></g></svg>
<div class="t" style="left:860.30px;top:283px;font-size:12px;transform:scaleX(0.9717);color:#2b5c9e;">1× overstappen</div>
<div style="position:absolute;left:523px;top:340px;width:2.2px;height:208px;background:#0079d3"></div>
<svg style="position:absolute;left:518.5px;top:335.5px;top:334.1px" width="11" height="11" viewBox="0 0 11 11" fill="none"><circle cx="5.5" cy="5.5" r="3.6" fill="#fff" stroke="#0079d3" stroke-width="1.8"/></svg>
<svg style="position:absolute;left:518.5px;top:335.5px;top:438.5px" width="11" height="11" viewBox="0 0 11 11" fill="none"><circle cx="5.5" cy="5.5" r="3.6" fill="#fff" stroke="#0079d3" stroke-width="1.8"/></svg>
<svg style="position:absolute;left:518.5px;top:335.5px;top:542.0px" width="11" height="11" viewBox="0 0 11 11" fill="none"><circle cx="5.5" cy="5.5" r="3.6" fill="#fff" stroke="#0079d3" stroke-width="1.8"/></svg>
<div class="t" style="left:482.10px;top:334px;font-size:12.8px;transform:scaleX(0.9191);color:#003082;font-weight:bold;">17:08</div>
<div class="t" style="left:538.30px;top:334px;font-size:12.8px;transform:scaleX(0.9449);color:#003082;font-weight:bold;">Amsterdam Centraal</div>
<div class="t" style="left:907.50px;top:335px;font-size:9.5px;transform:scaleX(1.1124);color:#2b5c9e;">Spoor 11b</div>
<div style="position:absolute;left:538px;top:360px;width:439px;height:1px;background:#e5e5e8"></div>
<svg style="position:absolute;left:491.5px;top:374.5px;" width="12" height="18" viewBox="0 0 12 18" fill="none"><g stroke="#7d7d85" stroke-width="1" fill="none"><rect x="1" y="1" width="9.3" height="11.4" rx="2.2"/><path d="M2.6 2.2 H8.7 V6.2 C8.7 7.6 8 8 6.8 8 H4.5 C3.3 8 2.6 7.6 2.6 6.2 Z" stroke-width="0.9"/><path d="M2.6 14.3 V17 M8.7 14.3 V17 M1.4 16.6 H9.9"/></g><circle cx="3.8" cy="10.2" r="0.8" fill="#7d7d85"/><circle cx="7.5" cy="10.2" r="0.8" fill="#7d7d85"/></svg>
<div class="t" style="left:538.40px;top:371px;font-size:9.5px;transform:scaleX(1.0570);color:#444;">NS Intercity</div>
<div class="t" style="left:538.40px;top:386px;font-size:9.5px;transform:scaleX(1.1197);color:#444;">richting Almere Centrum</div>
<svg style="position:absolute;left:905px;top:370px;" width="26" height="24" viewBox="0 0 26 24" fill="none"><g stroke="#2b5c9e" stroke-width="1.1" fill="none"><circle cx="8.1" cy="6.1" r="1.9"/><circle cx="13.4" cy="6.1" r="1.9"/><circle cx="18.8" cy="6.1" r="1.9"/><path d="M5.4 15.1 V10.8 Q5.4 9.3 7.3 9.3 M9.5 9.3 Q11.5 9.3 11.5 10.8 V15.6 M6.35 14.6 V21.7 M9.5 14.6 V21.7 M14.4 9.3 Q16.4 9.3 16.4 10.8 V15.6 M14.9 14.6 V21.7 M20 9.3 Q22 9.3 22 10.8 V15.6 M20.8 15.6 V21.7"/></g></svg>
<svg style="position:absolute;left:941px;top:380px;" width="11" height="8" viewBox="0 0 11 8" fill="none"><path d="M1 1.5 L5.5 6 L10 1.5" stroke="#3b8fd9" stroke-width="1.2"/></svg>
<div style="position:absolute;left:538px;top:405px;width:439px;height:1px;background:#e5e5e8"></div>
<div class="t" style="left:481.90px;top:420px;font-size:12.8px;transform:scaleX(0.9392);color:#444;">17:28</div>
<div class="t" style="left:538.30px;top:420px;font-size:12.8px;transform:scaleX(0.9508);color:#003082;font-weight:bold;">Almere Centrum</div>
<div class="t" style="left:919.80px;top:422px;font-size:9.5px;transform:scaleX(1.0647);color:#aaa;">Spoor 3</div>
<div class="t" style="left:538.40px;top:439px;font-size:9.5px;transform:scaleX(1.0876);color:#aaa;">Rechterzijde uitstappen</div>
<div class="t" style="left:482.00px;top:454px;font-size:12.8px;transform:scaleX(0.9160);color:#003082;font-weight:bold;">17:33</div>
<div class="t" style="left:538.40px;top:457px;font-size:9.5px;transform:scaleX(1.0979);color:#444;">Overstap op zelfde perron</div>
<div class="t" style="left:919.80px;top:456px;font-size:9.5px;transform:scaleX(1.0647);color:#2b5c9e;">Spoor 4</div>
<div style="position:absolute;left:538px;top:481px;width:439px;height:1px;background:#e5e5e8"></div>
<svg style="position:absolute;left:491.5px;top:495.5px;" width="12" height="18" viewBox="0 0 12 18" fill="none"><g stroke="#7d7d85" stroke-width="1" fill="none"><rect x="1" y="1" width="9.3" height="11.4" rx="2.2"/><path d="M2.6 2.2 H8.7 V6.2 C8.7 7.6 8 8 6.8 8 H4.5 C3.3 8 2.6 7.6 2.6 6.2 Z" stroke-width="0.9"/><path d="M2.6 14.3 V17 M8.7 14.3 V17 M1.4 16.6 H9.9"/></g><circle cx="3.8" cy="10.2" r="0.8" fill="#7d7d85"/><circle cx="7.5" cy="10.2" r="0.8" fill="#7d7d85"/></svg>
<div class="t" style="left:538.40px;top:492px;font-size:9.5px;transform:scaleX(1.0570);color:#444;">NS Intercity</div>
<div class="t" style="left:538.40px;top:507px;font-size:9.5px;transform:scaleX(1.1217);color:#444;">richting Groningen</div>
<svg style="position:absolute;left:905px;top:491px;" width="26" height="24" viewBox="0 0 26 24" fill="none"><g stroke="#2b5c9e" stroke-width="1.1" fill="none"><circle cx="8.1" cy="6.1" r="1.9"/><circle cx="13.4" cy="6.1" r="1.9"/><circle cx="18.8" cy="6.1" r="1.9"/><path d="M5.4 15.1 V10.8 Q5.4 9.3 7.3 9.3 M9.5 9.3 Q11.5 9.3 11.5 10.8 V15.6 M6.35 14.6 V21.7 M9.5 14.6 V21.7 M14.4 9.3 Q16.4 9.3 16.4 10.8 V15.6 M14.9 14.6 V21.7 M20 9.3 Q22 9.3 22 10.8 V15.6 M20.8 15.6 V21.7"/></g></svg>
<svg style="position:absolute;left:941px;top:501px;" width="11" height="8" viewBox="0 0 11 8" fill="none"><path d="M1 1.5 L5.5 6 L10 1.5" stroke="#3b8fd9" stroke-width="1.2"/></svg>
<div style="position:absolute;left:538px;top:526px;width:439px;height:1px;background:#e5e5e8"></div>
<div class="t" style="left:481.60px;top:542px;font-size:12.8px;transform:scaleX(0.9160);color:#003082;font-weight:bold;">18:13</div>
<div class="t" style="left:538.30px;top:542px;font-size:12.8px;transform:scaleX(0.9586);color:#003082;font-weight:bold;">Zwolle</div>
<div class="t" style="left:919.80px;top:543px;font-size:9.5px;transform:scaleX(1.0647);color:#2b5c9e;">Spoor 6</div>
<div class="t" style="left:538.40px;top:560px;font-size:9.5px;transform:scaleX(1.0876);color:#aaa;">Rechterzijde uitstappen</div>
<div style="position:absolute;left:459px;top:593px;width:518px;height:1px;background:#e5e5e8"></div>
<div class="t" style="left:480.40px;top:618px;font-size:18.5px;transform:scaleX(0.9639);color:#2b5c9e;">Station Zwolle</div>
<div class="t" style="left:480.40px;top:641px;font-size:9.5px;transform:scaleX(1.1090);color:#aaa;">Weersverwachting om 18:13</div>
<svg style="position:absolute;left:920px;top:613.8px;" width="37" height="24" viewBox="0 0 37 24" fill="none"><path d="M8 21.5 H29 C33 21.5 35.5 19 35.5 15.5 C35.5 12 33 9.5 29.5 9.5 C28.5 5 25 2 20.5 2 C16 2 13 4.5 11.8 8 C10.8 7.7 10 7.6 9 7.6 C4.5 7.6 1.5 10.8 1.5 14.6 C1.5 18.5 4.2 21.5 8 21.5 Z" stroke="#2b5c9e" stroke-width="1.3"/></svg>
<div class="t" style="left:480.40px;top:667px;font-size:13px;transform:scaleX(0.9059);color:#003082;font-weight:bold;">10°</div>
<div class="t" style="left:504.90px;top:667px;font-size:13px;transform:scaleX(0.9000);color:#003082;font-weight:bold;">C</div>
<svg style="position:absolute;left:523px;top:668.5px;" width="14" height="12" viewBox="0 0 14 12" fill="none"><path d="M12.5 1.5 L1.5 6.5 L6.5 7.5 L7.5 11.5 Z" stroke="#2b5c9e" stroke-width="1.1"/></svg>
<div class="t" style="left:542.60px;top:667px;font-size:13px;transform:scaleX(0.9165);color:#2b5c9e;">Zuidwest 3</div>
<svg style="position:absolute;left:634px;top:666px;" width="18" height="16" viewBox="0 0 18 16" fill="none"><g stroke="#3b8fd9" stroke-width="1.1" fill="none"><path d="M8.5 5.3 V2.4 H1.6 V14 H8.5 V10.5"/><path d="M5.1 7.5 H15.5 M12.4 4.3 L15.6 7.5 L12.4 10.7"/></g></svg>
<div class="t" style="left:660.40px;top:667px;font-size:13px;transform:scaleX(0.9187);color:#3b8fd9;">Bekijk details op Buienradar.nl</div>
</body></html>
